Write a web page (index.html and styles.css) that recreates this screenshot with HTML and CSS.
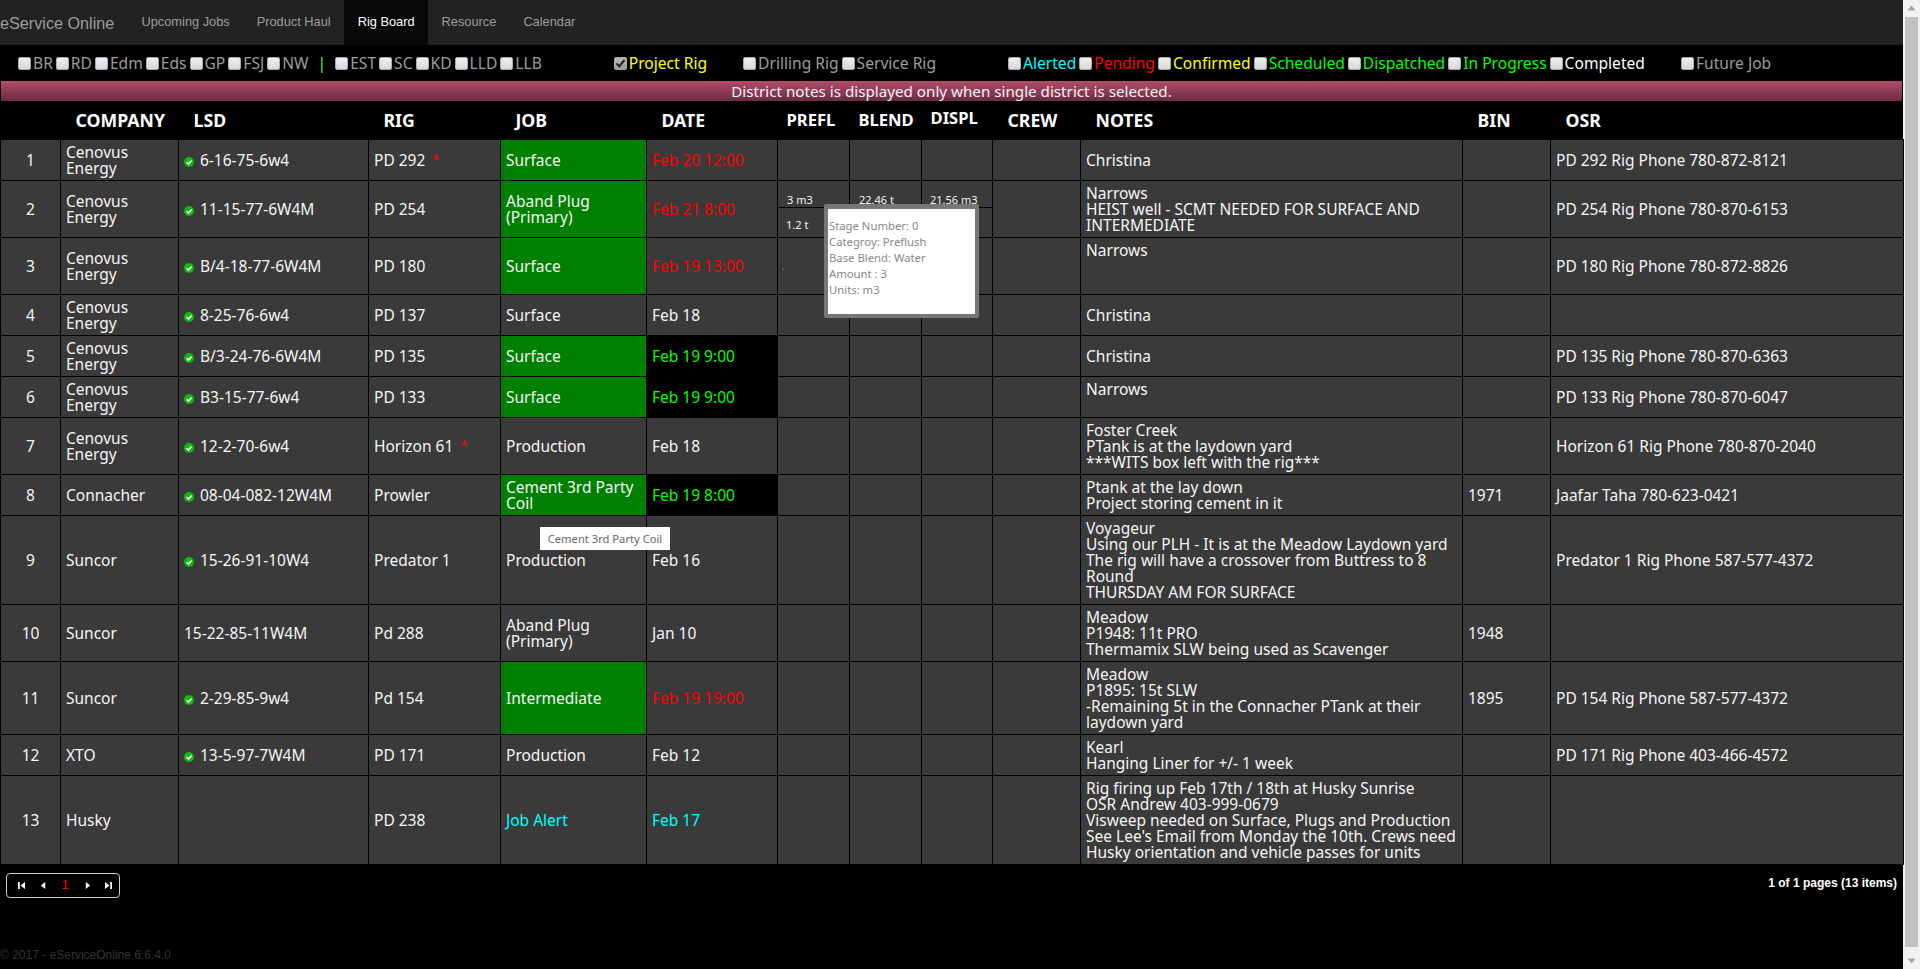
FILE: index.html
```html
<!DOCTYPE html>
<html lang="en">
<head>
<meta charset="utf-8">
<title>Rig Board - eService Online</title>
<link rel="stylesheet" href="styles.css">
</head>
<body>
<div class="page">
<div class="main">
  <nav class="nav">
    <a class="brand">eService Online</a>
    <a class="tab">Upcoming Jobs</a>
    <a class="tab">Product Haul</a>
    <a class="tab active">Rig Board</a>
    <a class="tab">Resource</a>
    <a class="tab">Calendar</a>
  </nav>
  <div class="filters">
    <div class="group g-district">
      <label class="f"><input type="checkbox">BR</label>
      <label class="f"><input type="checkbox">RD</label>
      <label class="f"><input type="checkbox">Edm</label>
      <label class="f"><input type="checkbox">Eds</label>
      <label class="f"><input type="checkbox">GP</label>
      <label class="f"><input type="checkbox">FSJ</label>
      <label class="f"><input type="checkbox">NW</label>
      <span class="sep">|</span>
      <label class="f"><input type="checkbox">EST</label>
      <label class="f"><input type="checkbox">SC</label>
      <label class="f"><input type="checkbox">KD</label>
      <label class="f"><input type="checkbox">LLD</label>
      <label class="f"><input type="checkbox">LLB</label>
    </div>
    <div class="group g-project">
      <label class="f c-yellow"><input type="checkbox" checked>Project Rig</label>
    </div>
    <div class="group g-rigs">
      <label class="f"><input type="checkbox">Drilling Rig</label>
      <label class="f"><input type="checkbox">Service Rig</label>
    </div>
    <div class="group g-status">
      <label class="f c-cyan"><input type="checkbox">Alerted</label>
      <label class="f c-red"><input type="checkbox">Pending</label>
      <label class="f c-yellow"><input type="checkbox">Confirmed</label>
      <label class="f c-lime"><input type="checkbox">Scheduled</label>
      <label class="f c-lime"><input type="checkbox">Dispatched</label>
      <label class="f c-lime"><input type="checkbox">In Progress</label>
      <label class="f c-white"><input type="checkbox">Completed</label>
    </div>
    <div class="group g-future">
      <label class="f"><input type="checkbox">Future Job</label>
    </div>
  </div>
  <div class="notice">District notes is displayed only when single district is selected.</div>
  <table class="board">
    <colgroup>
      <col class="w-num"><col class="w-company"><col class="w-lsd"><col class="w-rig"><col class="w-job"><col class="w-date"><col class="w-prefl"><col class="w-blend"><col class="w-displ"><col class="w-crew"><col class="w-notes"><col class="w-bin"><col class="w-osr">
    </colgroup>
    <thead>
      <tr>
        <th></th><th>COMPANY</th><th>LSD</th><th>RIG</th><th>JOB</th><th>DATE</th>
        <th class="th-s">PREFL</th><th class="th-s">BLEND</th><th class="th-s th-up">DISPL</th>
        <th>CREW</th><th>NOTES</th><th>BIN</th><th>OSR</th>
      </tr>
    </thead>
    <tbody>
      <tr>
        <td class="n">1</td><td>Cenovus<br>Energy</td>
        <td><svg class="ok" viewBox="0 0 10 10"><use href="#ok"/></svg>6-16-75-6w4</td>
        <td>PD 292<span class="star">*</span></td>
        <td class="j-green">Surface</td><td class="d-red">Feb 20 12:00</td>
        <td></td><td></td><td></td><td></td>
        <td>Christina</td><td></td><td>PD 292 Rig Phone 780-872-8121</td>
      </tr>
      <tr>
        <td class="n">2</td><td>Cenovus<br>Energy</td>
        <td><svg class="ok" viewBox="0 0 10 10"><use href="#ok"/></svg>11-15-77-6W4M</td>
        <td>PD 254</td>
        <td class="j-green">Aband Plug<br>(Primary)</td><td class="d-red">Feb 21 8:00</td>
        <td class="stage"><div class="s-top s-prefl">3 m3</div><div class="s-bot s-prefl">1.2 t</div></td>
        <td class="stage"><div class="s-top s-blend">22.46 t</div><div class="s-bot s-blend"></div></td>
        <td class="stage"><div class="s-top s-displ">21.56 m3</div><div class="s-bot s-displ"></div></td>
        <td></td>
        <td>Narrows<br>HEIST well - SCMT NEEDED FOR SURFACE AND<br>INTERMEDIATE</td><td></td><td>PD 254 Rig Phone 780-870-6153</td>
      </tr>
      <tr>
        <td class="n">3</td><td>Cenovus<br>Energy</td>
        <td><svg class="ok" viewBox="0 0 10 10"><use href="#ok"/></svg>B/4-18-77-6W4M</td>
        <td>PD 180</td>
        <td class="j-green">Surface</td><td class="d-red">Feb 19 13:00</td>
        <td class="dot-cell"><span class="dot">.</span></td><td></td><td></td><td></td>
        <td>Narrows<br>&nbsp;<br>&nbsp;</td><td></td><td>PD 180 Rig Phone 780-872-8826</td>
      </tr>
      <tr>
        <td class="n">4</td><td>Cenovus<br>Energy</td>
        <td><svg class="ok" viewBox="0 0 10 10"><use href="#ok"/></svg>8-25-76-6w4</td>
        <td>PD 137</td>
        <td>Surface</td><td>Feb 18</td>
        <td></td><td></td><td></td><td></td>
        <td>Christina</td><td></td><td></td>
      </tr>
      <tr>
        <td class="n">5</td><td>Cenovus<br>Energy</td>
        <td><svg class="ok" viewBox="0 0 10 10"><use href="#ok"/></svg>B/3-24-76-6W4M</td>
        <td>PD 135</td>
        <td class="j-green">Surface</td><td class="d-live">Feb 19 9:00</td>
        <td></td><td></td><td></td><td></td>
        <td>Christina</td><td></td><td>PD 135 Rig Phone 780-870-6363</td>
      </tr>
      <tr>
        <td class="n">6</td><td>Cenovus<br>Energy</td>
        <td><svg class="ok" viewBox="0 0 10 10"><use href="#ok"/></svg>B3-15-77-6w4</td>
        <td>PD 133</td>
        <td class="j-green">Surface</td><td class="d-live">Feb 19 9:00</td>
        <td></td><td></td><td></td><td></td>
        <td>Narrows<br>&nbsp;</td><td></td><td>PD 133 Rig Phone 780-870-6047</td>
      </tr>
      <tr>
        <td class="n">7</td><td>Cenovus<br>Energy</td>
        <td><svg class="ok" viewBox="0 0 10 10"><use href="#ok"/></svg>12-2-70-6w4</td>
        <td>Horizon 61<span class="star">*</span></td>
        <td>Production</td><td>Feb 18</td>
        <td></td><td></td><td></td><td></td>
        <td>Foster Creek<br>PTank is at the laydown yard<br>***WITS box left with the rig***</td><td></td><td>Horizon 61 Rig Phone 780-870-2040</td>
      </tr>
      <tr>
        <td class="n">8</td><td>Connacher</td>
        <td><svg class="ok" viewBox="0 0 10 10"><use href="#ok"/></svg>08-04-082-12W4M</td>
        <td>Prowler</td>
        <td class="j-green">Cement 3rd Party<br>Coil</td><td class="d-live">Feb 19 8:00</td>
        <td></td><td></td><td></td><td></td>
        <td>Ptank at the lay down<br>Project storing cement in it</td><td>1971</td><td>Jaafar Taha 780-623-0421</td>
      </tr>
      <tr>
        <td class="n">9</td><td>Suncor</td>
        <td><svg class="ok" viewBox="0 0 10 10"><use href="#ok"/></svg>15-26-91-10W4</td>
        <td>Predator 1</td>
        <td>Production</td><td>Feb 16</td>
        <td></td><td></td><td></td><td></td>
        <td>Voyageur<br>Using our PLH - It is at the Meadow Laydown yard<br>The rig will have a crossover from Buttress to 8<br>Round<br>THURSDAY AM FOR SURFACE</td><td></td><td>Predator 1 Rig Phone 587-577-4372</td>
      </tr>
      <tr>
        <td class="n">10</td><td>Suncor</td>
        <td>15-22-85-11W4M</td>
        <td>Pd 288</td>
        <td>Aband Plug<br>(Primary)</td><td>Jan 10</td>
        <td></td><td></td><td></td><td></td>
        <td>Meadow<br>P1948: 11t PRO<br>Thermamix SLW being used as Scavenger</td><td>1948</td><td></td>
      </tr>
      <tr>
        <td class="n">11</td><td>Suncor</td>
        <td><svg class="ok" viewBox="0 0 10 10"><use href="#ok"/></svg>2-29-85-9w4</td>
        <td>Pd 154</td>
        <td class="j-green">Intermediate</td><td class="d-red">Feb 19 19:00</td>
        <td></td><td></td><td></td><td></td>
        <td>Meadow<br>P1895: 15t SLW<br>-Remaining 5t in the Connacher PTank at their<br>laydown yard</td><td>1895</td><td>PD 154 Rig Phone 587-577-4372</td>
      </tr>
      <tr>
        <td class="n">12</td><td>XTO</td>
        <td><svg class="ok" viewBox="0 0 10 10"><use href="#ok"/></svg>13-5-97-7W4M</td>
        <td>PD 171</td>
        <td>Production</td><td>Feb 12</td>
        <td></td><td></td><td></td><td></td>
        <td>Kearl<br>Hanging Liner for +/- 1 week<br></td><td></td><td>PD 171 Rig Phone 403-466-4572</td>
      </tr>
      <tr>
        <td class="n">13</td><td>Husky</td>
        <td></td>
        <td>PD 238</td>
        <td class="t-cyan">Job Alert</td><td class="t-cyan">Feb 17</td>
        <td></td><td></td><td></td><td></td>
        <td>Rig firing up Feb 17th / 18th at Husky Sunrise<br>OSR Andrew 403-999-0679<br>Visweep needed on Surface, Plugs and Production<br>See Lee's Email from Monday the 10th. Crews need<br>Husky orientation and vehicle passes for units</td><td></td><td></td>
      </tr>
    </tbody>
  </table>
  <div class="pagerbar">
    <div class="pager">
      <svg class="pi" viewBox="0 0 8 10"><path d="M0 1h2v8H0zM8 1v8L3 5z"/></svg>
      <svg class="pi" viewBox="0 0 8 10"><path d="M6 1v8L1 5z"/></svg>
      <span class="cur">1</span>
      <svg class="pi" viewBox="0 0 8 10"><path d="M2 1v8l5-4z"/></svg>
      <svg class="pi" viewBox="0 0 8 10"><path d="M0 1v8l5-4zM6 1h2v8H6z"/></svg>
    </div>
    <div class="pageinfo">1 of 1 pages (13 items)</div>
  </div>
  <footer class="foot">© 2017 - eServiceOnline 6.6.4.0</footer>

  <div class="tip-stage">Stage Number: 0<br>Categroy: Preflush<br>Base Blend: Water<br>Amount : 3<br>Units: m3</div>
  <div class="tip-job">Cement 3rd Party Coil</div>
</div>
<aside class="scrollbar">
  <svg class="sb-arrow" viewBox="0 0 17 17"><path d="M4.5 10.5h8l-4-5z"/></svg>
  <div class="sb-thumb"></div>
  <svg class="sb-arrow" viewBox="0 0 17 17"><path d="M4.5 6.5h8l-4 5z"/></svg>
</aside>
</div>
<svg class="defs" width="0" height="0"><defs>
  <g id="ok"><circle cx="5" cy="5" r="5" fill="#0dbb0d"/><path d="M2.6 5.2 4.4 7l3.2-3.4" fill="none" stroke="#fff" stroke-width="1.6"/></g>
</defs></svg>
</body>
</html>
```
FILE: styles.css
```css
html, body { margin: 0; padding: 0; height: 969px; overflow: hidden; background: #000; }
body { font-family: "Noto Sans", "Open Sans", sans-serif; font-size: 15.5px; line-height: 16px; color: #f5f5f5; }
.page { display: flex; height: 969px; }
.main { position: relative; flex: 1 1 auto; min-width: 0; }
.defs { position: absolute; }

.nav { display: flex; align-items: center; height: 45px; background: #222; font-family: "Liberation Sans", Arial, sans-serif; }
.brand { font-size: 16.2px; color: #9d9d9d; width: 128px; }
.tab { font-size: 12.8px; color: #9d9d9d; padding: 0 13.5px; height: 45px; line-height: 44px; }
.tab.active { background: #080808; color: #fff; }

.filters { display: flex; align-items: center; height: 36px; color: #9d9d9d; font-size: 15.6px; }
.group { display: flex; align-items: center; gap: 3px; }
.g-district { margin-left: 18px; }
.g-project { margin-left: 72px; }
.g-rigs { margin-left: 36px; }
.g-status { margin-left: 72px; }
.g-future { margin-left: 36px; }
.f { display: flex; align-items: center; gap: 2px; white-space: nowrap; }
.f input { appearance: none; -webkit-appearance: none; margin: 0; width: 13px; height: 13px; border-radius: 2px; border: 1px solid #aaa; background: linear-gradient(#eee, #d8d8d8); position: relative; }
.f input:checked { background: linear-gradient(#bbb, #999); }
.f input:checked::after { content: ""; position: absolute; left: 3.5px; top: 0.5px; width: 3px; height: 7px; border: solid #222; border-width: 0 2px 2px 0; transform: rotate(40deg); }
.sep { color: #9fe000; margin: 0 6px; }
.c-yellow { color: #ff0; }
.c-cyan { color: #0ff; }
.c-red { color: #f00; }
.c-lime { color: #0f0; }
.c-white { color: #fff; }

.notice { height: 20px; margin: 0 1px; line-height: 20px; text-align: center; color: #f5f5f5; font-size: 15.2px; background: linear-gradient(#b24c6a, #6c2a44); }

.board { table-layout: fixed; border-collapse: collapse; width: 1903px; }
.w-num { width: 60px; } .w-company { width: 118px; } .w-lsd { width: 190px; } .w-rig { width: 132px; }
.w-job { width: 146px; } .w-date { width: 131px; } .w-prefl { width: 72px; } .w-blend { width: 72px; }
.w-displ { width: 71px; } .w-crew { width: 88px; } .w-notes { width: 382px; } .w-bin { width: 88px; } .w-osr { width: 353px; }
.board th { height: 38px; padding: 0 0 0 15px; text-align: left; color: #fff; font-size: 17.7px; font-weight: 700; border: 0; box-sizing: border-box; }
.board .th-s { padding-left: 9px; font-size: 16.6px; }
.board .th-up { padding-bottom: 3px; }
.board td { padding: 4px 5px; border: 1px solid #000; background: #3a3a3a; vertical-align: middle; white-space: nowrap; overflow: hidden; }
.board .n { text-align: center; }
.board .j-green { background: #008000; }
.board .d-red { color: #f00; }
.board .d-live { background: #000; color: #0f0; }
.board .t-cyan { color: #0ff; }
.ok { width: 10px; height: 10px; margin-right: 6px; vertical-align: -1px; }
.star { color: #f00; margin-left: 7px; font-size: 13px; vertical-align: 2px; }
.board .stage { padding: 0; font-size: 11px; vertical-align: top; }
.s-top { height: 27px; padding-top: 11px; box-sizing: border-box; border-bottom: 1px solid #000; margin-left: 1px; }
.s-bot { padding-top: 9px; height: 16px; }
.s-prefl { padding-left: 8px; }
.s-blend { padding-left: 8px; }
.s-displ { padding-left: 7px; }
.board .dot-cell { padding: 0 0 0 4px; font-size: 11px; }
.dot { color: #6a90d0; }

.pagerbar { display: flex; justify-content: space-between; padding: 8px 6px 0 6px; }
.pager { display: flex; align-items: center; gap: 0; box-sizing: border-box; width: 114px; height: 25px; padding: 0 7px 0 11px; justify-content: space-between; border: 1px solid #ccc; border-radius: 4px; }
.pi { width: 7px; height: 9px; fill: #fff; }
.cur { color: #f00; font-family: "Liberation Sans", Arial, sans-serif; font-size: 13px; width: 8px; text-align: center; }
.pageinfo { font-family: "Liberation Sans", Arial, sans-serif; font-size: 12px; font-weight: 700; color: #fff; margin-top: 2px; }
.foot { margin-top: 49px; font-family: "Liberation Sans", Arial, sans-serif; font-size: 12px; color: #333; line-height: 16px; }

.tip-stage { position: absolute; left: 824px; top: 204px; padding: 9px 0 0 1px; box-sizing: content-box; background: #fff; border: 4px solid #777; border-top-width: 5px; border-radius: 2px; color: #888; font-size: 11.3px; height: 96px; width: 146px; }
.tip-job { position: absolute; left: 540px; top: 527px; width: 130px; height: 23px; line-height: 23px; text-align: center; background: #fff; color: #666; font-size: 11.2px; }

.scrollbar { flex: 0 0 17px; display: flex; flex-direction: column; background: #f1f1f1; }
.sb-arrow { width: 17px; height: 17px; fill: #a3a3a3; flex: none; }
.sb-thumb { flex: 1; margin: 0 2px 5px 2px; background: #c1c1c1; }
```
